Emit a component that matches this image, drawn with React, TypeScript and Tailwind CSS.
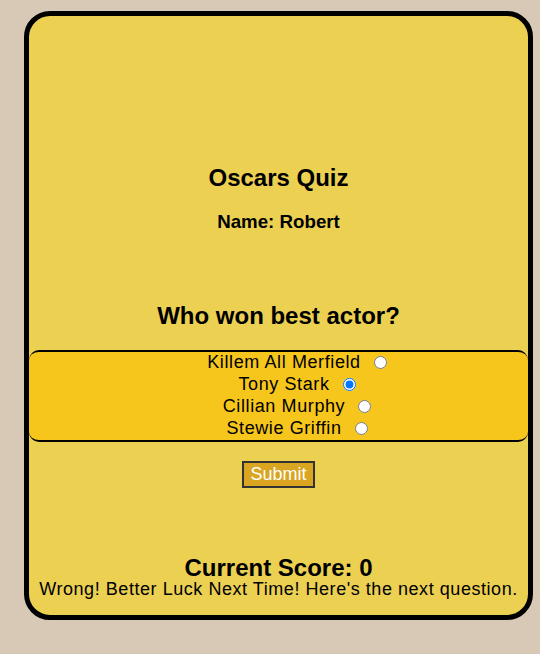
import React from "react";

export default function App() {
  const options = ["Killem All Merfield", "Tony Stark", "Cillian Murphy", "Stewie Griffin"];
  return (
    <div className="w-[540px] h-[654px] bg-[#d8c8b6] pt-[11px] pl-[24px] overflow-hidden" style={{ fontFamily: '"Liberation Sans", Arial, sans-serif' }}>
      <div className="w-[509px] h-[609px] box-border border-[5px] border-black rounded-[26px] bg-[#ecd052] flex flex-col items-center text-black pt-[148px]">
        <div className="text-[24px] leading-[28px] font-bold">Oscars Quiz</div>
        <div className="mt-[19px] text-[18.72px] leading-[22px] font-bold">Name: Robert</div>
        <div className="mt-[69px] text-[24px] leading-[28px] font-bold">Who won best actor?</div>
        <div className="mt-[20px] w-full box-border border-y-2 border-black rounded-[10px] bg-[#f7c61d] flex flex-col items-center pl-[40px]">
          {options.map((o, i) => (
            <div key={o} className="text-[18px] leading-[22px] tracking-[0.6px] flex items-center -translate-y-[1px]">
              <span>{o}</span>
              <input type="radio" name="actor" defaultChecked={i === 1} className="ml-[13px] mr-[3px] w-[13px] h-[13px]" />
            </div>
          ))}
        </div>
        <button className="mt-[19px] h-[27px] px-[6px] box-border border-2 border-[#333] bg-[#daa520] text-white text-[18px] leading-[21px]">Submit</button>
        <div className="mt-[70px] text-[24px] leading-[20px] font-bold">Current Score: 0</div>
        <div className="mt-[1px] text-[18px] leading-[20px] tracking-[0.55px]">Wrong! Better Luck Next Time! Here's the next question.</div>
      </div>
    </div>
  );
}
